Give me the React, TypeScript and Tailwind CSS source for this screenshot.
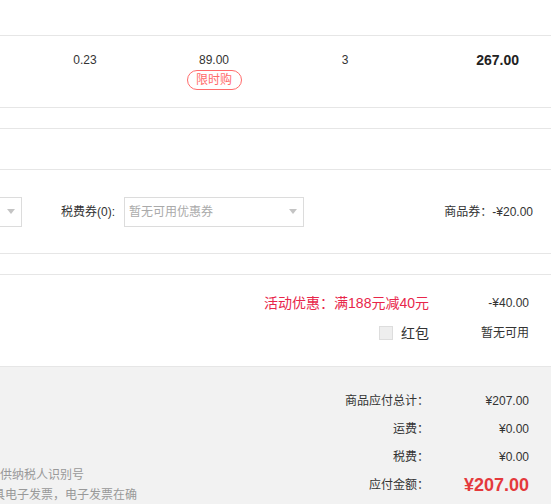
import React from 'react'

function Select({ text, className }: { text?: string; className?: string }) {
  return (
    <div className={`h-[30px] border border-[#dcdcdc] bg-white flex items-center justify-between pl-[4px] pr-[6px] ${className ?? ''}`}>
      <span className="text-[#aaa] text-[12px]">{text}</span>
      <span className="w-0 h-0 border-l-[4px] border-r-[4px] border-t-[5px] border-l-transparent border-r-transparent border-t-[#c4c4c4]" />
    </div>
  )
}

export default function App() {
  return (
    <div
      className="w-[551px] h-[504px] overflow-hidden bg-white text-[#333] text-[12px]"
      style={{ fontFamily: '"Liberation Sans", "Noto Sans CJK SC", sans-serif' }}
    >
      <div className="h-[36px] border-b border-[#e6e6e6]" />

      {/* item row */}
      <div className="h-[72px] border-b border-[#e6e6e6] flex items-start pt-[17px] leading-[14px]">
        <div className="w-[130px] pl-[40px] text-center">0.23</div>
        <div className="w-[130px] ml-[19px] flex flex-col items-center">
          <span>89.00</span>
          <span className="mt-[3px] h-[20px] w-[55px] rounded-full border border-[#ff6b6b] text-[#ff6b6b] flex items-center justify-center text-[12px]">
            限时购
          </span>
        </div>
        <div className="w-[90px] ml-[21px] text-center">3</div>
        <div className="flex-1 text-right pr-[32px] text-[14px] font-bold text-[#222]">267.00</div>
      </div>

      <div className="h-[21px] border-b border-[#e6e6e6]" />
      <div className="h-[41px] border-b border-[#e6e6e6]" />

      {/* coupons */}
      <div className="h-[84px] border-b border-[#e6e6e6] flex items-center">
        <Select className="w-[100px] -ml-[78px]" />
        <span className="ml-[39px]">税费券(0):</span>
        <Select className="w-[180px] ml-[9px]" text="暂无可用优惠券" />
        <span className="ml-auto pr-[18px]">商品券：-¥20.00</span>
      </div>

      <div className="h-[21px] border-b border-[#e6e6e6]" />

      {/* discounts */}
      <div className="h-[91px] pt-[13px] pr-[22px] flex flex-col">
        <div className="h-[30px] flex items-center justify-end">
          <span className="text-[#e8264a] text-[14px]">活动优惠：满188元减40元</span>
          <span className="w-[100px] text-right">-¥40.00</span>
        </div>
        <div className="h-[30px] flex items-center justify-end">
          <span className="w-[14px] h-[14px] bg-[#eee] border border-[#ddd] mr-[8px]" />
          <span className="text-[14px]">红包</span>
          <span className="w-[100px] text-right">暂无可用</span>
        </div>
      </div>

      {/* summary */}
      <div className="h-[140px] bg-[#f2f2f2] border-t border-[#e6e6e6] flex justify-between">
        <div className="pt-[98px] text-[#999] leading-[20px]">
          <div>供纳税人识别号</div>
          <div className="-ml-[7px]">具电子发票，电子发票在确</div>
        </div>
        <div className="pt-[20px] pr-[22px] flex flex-col">
          {[
            ['商品应付总计：', '¥207.00'],
            ['运费：', '¥0.00'],
            ['税费：', '¥0.00'],
          ].map(([k, v]) => (
            <div key={k} className="h-[28px] flex items-center justify-end">
              <span>{k}</span>
              <span className="w-[100px] text-right">{v}</span>
            </div>
          ))}
          <div className="h-[28px] flex items-center justify-end">
            <span>应付金额：</span>
            <span className="w-[100px] text-right text-[#e4393c] text-[18px] font-bold">¥207.00</span>
          </div>
        </div>
      </div>
    </div>
  )
}
